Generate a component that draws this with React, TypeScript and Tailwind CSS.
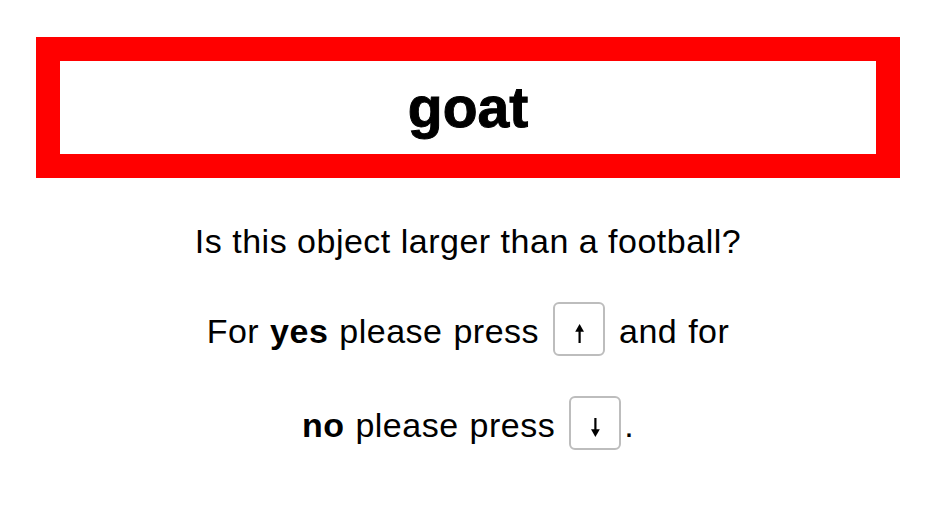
function Arrow({ down = false }: { down?: boolean }) {
  return (
    <svg
      width="9"
      height="19"
      viewBox="0 0 9 19"
      className={"inline-block align-baseline" + (down ? " rotate-180" : "")}
    >
      <rect x="3.5" y="5" width="2.2" height="14" fill="#000" />
      <polygon points="0.2,7.8 4.6,0 9,7.8" fill="#000" />
    </svg>
  );
}

export default function App() {
  const key =
    "mx-[3px] inline-block w-[52px] rounded-[6px] border-2 border-[#bdbdbd] pt-[20px] pb-[8px] text-center align-baseline text-[20px] leading-[20px] tracking-normal";
  return (
    <div className="min-h-[520px] bg-white text-black font-['Liberation_Sans',Arial,sans-serif]">
      <div className="pt-[37px] pl-[36px]">
        <div className="flex h-[141px] w-[864px] items-center justify-center border-[24px] border-[#ff0000] bg-white">
          <span className="text-[57px] font-bold leading-none [-webkit-text-stroke:1px_#000]">goat</span>
        </div>
        <div className="w-[864px] text-center text-[34px] tracking-[0.5px]">
          <div className="mt-[43px] leading-[40px]">Is this object larger than a football?</div>
          <div className="mt-[41px] leading-[40px] [word-spacing:1px]">
            For <b>yes</b> please press{" "}
            <span className={key}>
              <Arrow />
            </span>{" "}
            and for
          </div>
          <div className="mt-[40px] leading-[40px] [word-spacing:1px]">
            <b>no</b> please press{" "}
            <span className={key}>
              <Arrow down />
            </span>
            .
          </div>
        </div>
      </div>
    </div>
  );
}
